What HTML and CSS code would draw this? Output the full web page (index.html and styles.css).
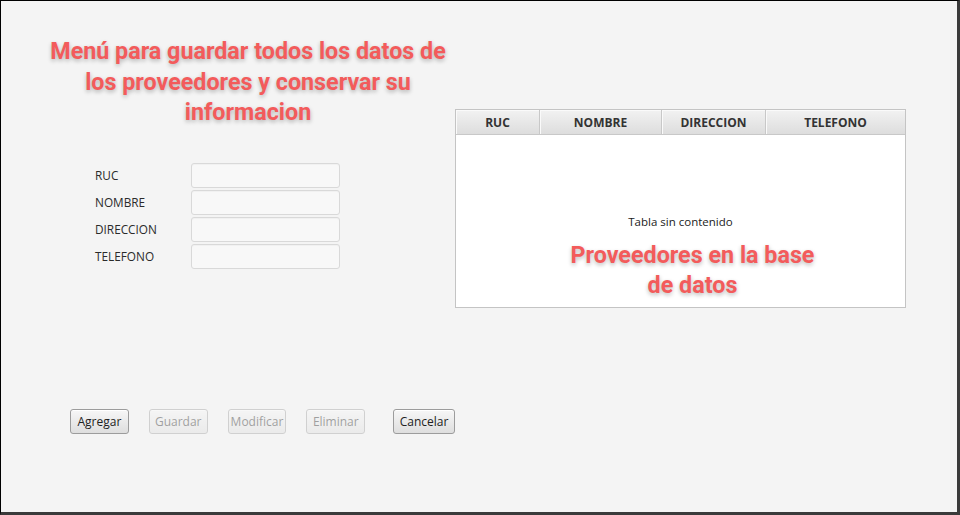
FILE: index.html
```html
<!DOCTYPE html>
<html lang="es">
<head>
<meta charset="utf-8">
<title>Proveedores</title>
<link rel="stylesheet" href="styles.css">
</head>
<body>
<div class="window">
  <div class="left">
    <h1 class="title">Menú para guardar todos los datos de<br>los proveedores y conservar su<br>informacion</h1>
    <div class="form">
      <label class="lbl">RUC</label><input class="field" type="text">
      <label class="lbl">NOMBRE</label><input class="field" type="text">
      <label class="lbl">DIRECCION</label><input class="field" type="text">
      <label class="lbl">TELEFONO</label><input class="field" type="text">
    </div>
    <div class="buttons">
      <button class="btn">Agregar</button>
      <button class="btn" disabled>Guardar</button>
      <button class="btn" disabled>Modificar</button>
      <button class="btn" disabled>Eliminar</button>
      <button class="btn cancel">Cancelar</button>
    </div>
  </div>
  <div class="right">
    <div class="table">
      <div class="thead">
        <div class="th c1">RUC</div>
        <div class="th c2">NOMBRE</div>
        <div class="th c3">DIRECCION</div>
        <div class="th c4">TELEFONO</div>
      </div>
      <div class="tbody">
        <div class="placeholder">Tabla sin contenido</div>
        <div class="overlay">Proveedores en la base<br>de datos</div>
      </div>
    </div>
  </div>
</div>
</body>
</html>
```
FILE: styles.css
```css
html, body {
  margin: 0;
  padding: 0;
  background: #f4f4f4;
}
.window {
  box-sizing: border-box;
  width: 960px;
  height: 515px;
  background: #f4f4f4;
  border-top: 1px solid #000;
  border-left: 1px solid #000;
  border-right: 3px solid #3a3a3a;
  border-bottom: 3px solid #3a3a3a;
  display: flex;
  font-family: "Open Sans", "Liberation Sans", sans-serif;
  font-size: 12px;
  color: #333;
}
.left {
  width: 454px;
  display: flex;
  flex-direction: column;
}
.title {
  margin: 35px 0 0 27px;
  width: 440px;
  font-family: Roboto, sans-serif;
  font-weight: 700;
  font-size: 23.3px;
  line-height: 30.5px;
  text-align: center;
  color: #f35b5b;
  text-shadow: 0 2px 4px rgba(0,0,0,0.28);
}
.form {
  margin: 35px 0 0 94px;
  display: grid;
  grid-template-columns: 96px 149px;
  grid-auto-rows: 25px;
  row-gap: 2px;
  align-items: center;
}
.lbl {
  font-size: 11.8px;
  color: #2a2a2a;
}
.field {
  box-sizing: border-box;
  width: 149px;
  height: 25px;
  margin: 0;
  background: #f8f8f8;
  border: 1px solid #d9d9d9;
  border-radius: 3px;
  box-shadow: inset 0 1px 1px rgba(0,0,0,0.03);
}
.buttons {
  margin: 140px 0 0 69px;
  display: flex;
  gap: 20px;
}
.btn {
  box-sizing: border-box;
  width: 59px;
  height: 25px;
  padding: 0;
  font-family: "Open Sans", "Liberation Sans", sans-serif;
  font-size: 12px;
  color: #222;
  background: linear-gradient(#f7f7f7, #dedede);
  border: 1px solid #9c9c9c;
  border-radius: 3px;
  box-shadow: inset 0 1px 0 #fff;
}
.btn:disabled {
  opacity: 0.4;
}
.cancel {
  width: 62px;
  margin-left: 8px;
}
.right {
  padding-top: 108px;
}
.table {
  box-sizing: border-box;
  width: 451px;
  height: 199px;
  background: #fff;
  border: 1px solid #c4c4c4;
  display: flex;
  flex-direction: column;
}
.thead {
  display: flex;
  height: 24px;
  background: linear-gradient(#f2f2f2, #dddddd);
  border-bottom: 1px solid #c8c8c8;
}
.th {
  box-sizing: border-box;
  display: flex;
  align-items: center;
  justify-content: center;
  font-weight: 700;
  font-size: 12px;
  color: #333;
  border-right: 1px solid #c8c8c8;
  box-shadow: inset 1px 1px 0 #fafafa;
}
.c1 { width: 84px; }
.c2 { width: 122px; }
.c3 { width: 104px; }
.c4 { width: 139px; border-right: none; }
.tbody {
  flex: 1;
  display: flex;
  flex-direction: column;
  align-items: center;
  padding-top: 79px;
}
.placeholder {
  line-height: 16px;
  font-size: 11.5px;
  color: #222;
}
.overlay {
  margin: 10px 0 0 24px;
  font-family: Roboto, sans-serif;
  font-weight: 700;
  font-size: 23.3px;
  line-height: 30px;
  text-align: center;
  color: #f35b5b;
  text-shadow: 0 2px 4px rgba(0,0,0,0.28);
}
```
